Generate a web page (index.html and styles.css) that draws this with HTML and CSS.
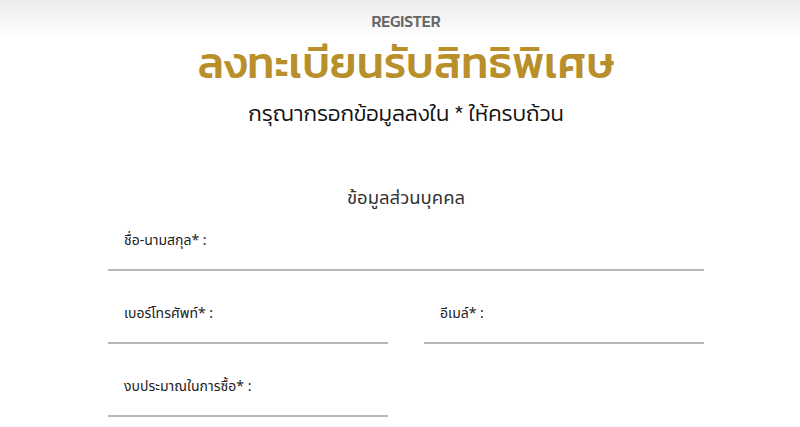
FILE: index.html
```html
<!DOCTYPE html>
<html lang="th">
<head>
<meta charset="utf-8">
<link rel="stylesheet" href="styles.css">
</head>
<body>
<div class="page">
  <header class="head">
    <div class="kicker">REGISTER</div>
    <h1 class="title">ลงทะเบียนรับสิทธิพิเศษ</h1>
    <p class="sub">กรุณากรอกข้อมูลลงใน * ให้ครบถ้วน</p>
  </header>
  <section class="form">
    <h2 class="section">ข้อมูลส่วนบุคคล</h2>
    <div class="row">
      <div class="field"><span class="label">ชื่อ-นามสกุล* :</span></div>
    </div>
    <div class="row two">
      <div class="field"><span class="label">เบอร์โทรศัพท์* :</span></div>
      <div class="field"><span class="label">อีเมล์* :</span></div>
    </div>
    <div class="row two">
      <div class="field"><span class="label">งบประมาณในการซื้อ* :</span></div>
    </div>
  </section>
</div>
</body>
</html>
```
FILE: styles.css
```css
html, body { margin: 0; padding: 0; }
body {
  background: #fff;
  font-family: "Noto Sans Thai", "Noto Sans", sans-serif;
  color: #222;
}
.page {
  background: linear-gradient(#ececec 0, #ffffff 40px);
  min-height: 427px;
  padding-left: 12px;
}
.head {
  text-align: center;
  padding-top: 10px;
}
.kicker {
  font-family: "Kanit", "Noto Sans", sans-serif;
  font-size: 16px;
  font-weight: 500;
  color: #666;
  line-height: 22px;
}
.title {
  margin: 4px 0 0;
  font-family: "Kanit", "Noto Sans Thai", sans-serif;
  font-size: 44px;
  line-height: 54px;
  font-weight: 500;
  color: #b88f2a;
}
.sub {
  margin: 9px 0 0;
  font-family: "Kanit", "Noto Sans Thai", sans-serif;
  font-size: 22px;
  line-height: 30px;
  font-weight: 300;
  color: #111;
}
.form {
  width: 596px;
  margin: 0 auto;
}
.section {
  margin: 56px 0 0;
  text-align: center;
  font-size: 18.5px;
  line-height: 26px;
  font-weight: 400;
  color: #333;
}
.row {
  display: grid;
  grid-template-columns: 1fr;
  column-gap: 36px;
  margin-top: 3px;
}
.row.two { grid-template-columns: 1fr 1fr; }
.row + .row { margin-top: 16px; }
.field {
  border-bottom: 2px solid #b7b7b7;
  height: 39px;
  padding: 16px 16px 0;
  box-sizing: content-box;
  display: flex;
  align-items: flex-start;
}
.label {
  font-size: 14px;
  line-height: 22px;
  color: #222;
}
```
